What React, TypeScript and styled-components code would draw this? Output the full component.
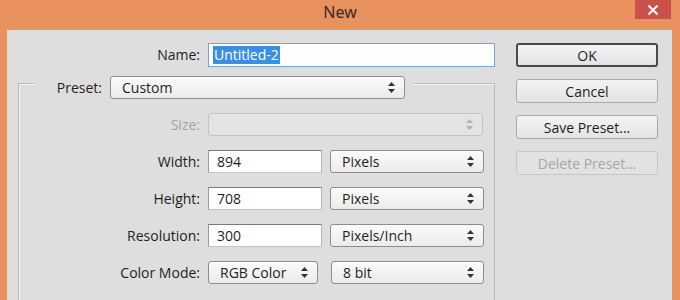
import React from "react";
import styled, { createGlobalStyle, css } from "styled-components";

const Global = createGlobalStyle`
  html, body { margin: 0; padding: 0; background: #e9915f; }
  body { font-family: "Open Sans", "Noto Sans", Arial, sans-serif; }
`;

const Window = styled.div`
  width: 680px;
  height: 300px;
  background: #e9915f;
  padding: 0 8px 0 7px;
  box-sizing: border-box;
  display: flex;
  flex-direction: column;
  overflow: hidden;
`;

const TitleBar = styled.div`
  height: 30px;
  flex: none;
  display: grid;
  grid-template-columns: 1fr auto 1fr;
  align-items: start;
  margin: 0 1px 0 2px;
`;

const Title = styled.div`
  grid-column: 2;
  font-family: "Noto Sans", "Open Sans", sans-serif;
  font-size: 16px;
  color: #3a2a22;
  line-height: 24px;
`;

const CloseButton = styled.button`
  grid-column: 3;
  justify-self: end;
  width: 36px;
  height: 19px;
  border: none;
  padding: 0;
  background: #c9504b;
  display: flex;
  align-items: center;
  justify-content: center;
`;

const Body = styled.div`
  flex: 1;
  background: #dedede;
  display: flex;
  gap: 21px;
  padding-top: 13px;
  font-size: 14px;
  color: #1e1e1e;
`;

const FormColumn = styled.div`
  width: 488px;
  display: flex;
  flex-direction: column;
  gap: 16px;
`;

const NameRow = styled.div`
  display: grid;
  grid-template-columns: 193px 287px;
  gap: 8px;
  align-items: center;
`;

const Label = styled.span<{ $disabled?: boolean }>`
  text-align: right;
  white-space: nowrap;
  color: ${p => (p.$disabled ? "#a3a3a3" : "#1e1e1e")};
  line-height: 20px;
`;

const NameInput = styled.div`
  height: 24px;
  box-sizing: border-box;
  border: 1px solid #7da2ce;
  background: #fff;
  padding: 1px 4px;
  display: flex;
  align-items: center;
`;

const Selected = styled.span`
  background: #3b8fe3;
  color: #fff;
  padding: 0 1px;
  line-height: 18px;
`;

const GroupBox = styled.div`
  margin-left: 11px;
  flex: 1;
  border: 1px solid #b9b9b9;
  border-bottom: none;
  box-shadow: inset 1px 1px 0 #f4f4f4;
  display: flex;
  flex-direction: column;
  gap: 14px;
`;

const GroupHeader = styled.div`
  margin: -8px 0 0 16px;
  padding-right: 8px;
  width: fit-content;
  background: #dedede;
  display: grid;
  grid-template-columns: 67px 295px;
  gap: 8px;
  align-items: center;
`;

const FieldRow = styled.div<{ $cols: string }>`
  display: grid;
  grid-template-columns: ${p => p.$cols};
  gap: 8px;
  align-items: center;
`;

const Controls = styled.div<{ $gap: number }>`
  display: flex;
  gap: ${p => p.$gap}px;
`;

const TextField = styled.div<{ $w: number }>`
  width: ${p => p.$w}px;
  height: 23px;
  box-sizing: border-box;
  border: 1px solid #8a8a8a;
  border-color: #7a7a7a #b4b4b4 #c4c4c4 #9a9a9a;
  background: #fff;
  padding: 0 8px;
  display: flex;
  align-items: center;
`;

const SelectBox = styled.div<{ $w: number; $disabled?: boolean }>`
  width: ${p => p.$w}px;
  height: 23px;
  box-sizing: border-box;
  border-radius: 3px;
  padding: 0 9px 0 11px;
  display: flex;
  align-items: center;
  justify-content: space-between;
  ${p =>
    p.$disabled
      ? css`
          border: 1px solid #c3c3c3;
          background: #e4e4e4;
          color: #b0b0b0;
        `
      : css`
          border: 1px solid #8d8d8d;
          background: linear-gradient(#fbfbfb, #ebebeb);
          color: #1e1e1e;
        `}
`;

const ButtonColumn = styled.div`
  width: 142px;
  display: flex;
  flex-direction: column;
  gap: 12px;
`;

const Button = styled.button<{ $default?: boolean }>`
  height: 24px;
  border-radius: 3px;
  font-family: inherit;
  font-size: 14px;
  padding: 0;
  background: linear-gradient(#f4f4f4, #e3e3e3);
  color: ${p => (p.disabled ? "#a6a6a6" : "#1e1e1e")};
  border: ${p => (p.$default ? "2px solid #4a4a4a" : "1px solid #a9a9a9")};
  ${p =>
    p.disabled &&
    css`
      border-color: #c6c6c6;
      background: #e2e2e2;
    `}
`;

const Arrows = ({ disabled }: { disabled?: boolean }) => (
  <svg width="7" height="11" viewBox="0 0 7 11">
    <path d="M3.5 0 L7 4 L0 4 Z M0 7 L7 7 L3.5 11 Z" fill={disabled ? "#b2b2b2" : "#333"} />
  </svg>
);

const Select = ({ w, value, disabled }: { w: number; value: string; disabled?: boolean }) => (
  <SelectBox $w={w} $disabled={disabled}>
    <span>{value}</span>
    <Arrows disabled={disabled} />
  </SelectBox>
);

const rows = [
  { label: "Width:", value: "894", unit: "Pixels" },
  { label: "Height:", value: "708", unit: "Pixels" },
  { label: "Resolution:", value: "300", unit: "Pixels/Inch" },
];

export default function App() {
  return (
    <Window>
      <Global />
      <TitleBar>
        <Title>New</Title>
        <CloseButton>
          <svg width="12" height="12" viewBox="0 0 12 12">
            <path d="M1.5 1.5 L10.5 10.5 M10.5 1.5 L1.5 10.5" stroke="#fff" strokeWidth="2" />
          </svg>
        </CloseButton>
      </TitleBar>
      <Body>
        <FormColumn>
          <NameRow>
            <Label>Name:</Label>
            <NameInput>
              <Selected>Untitled-2</Selected>
            </NameInput>
          </NameRow>
          <GroupBox>
            <GroupHeader>
              <Label>Preset:</Label>
              <Select w={295} value="Custom" />
            </GroupHeader>
            <FieldRow $cols="181px 275px">
              <Label $disabled>Size:</Label>
              <Select w={275} value="" disabled />
            </FieldRow>
            {rows.map(r => (
              <FieldRow key={r.label} $cols="181px auto">
                <Label>{r.label}</Label>
                <Controls $gap={8}>
                  <TextField $w={114}>{r.value}</TextField>
                  <Select w={154} value={r.unit} />
                </Controls>
              </FieldRow>
            ))}
            <FieldRow $cols="181px auto">
              <Label>Color Mode:</Label>
              <Controls $gap={13}>
                <Select w={110} value="RGB Color" />
                <Select w={153} value="8 bit" />
              </Controls>
            </FieldRow>
          </GroupBox>
        </FormColumn>
        <ButtonColumn>
          <Button $default>OK</Button>
          <Button>Cancel</Button>
          <Button>Save Preset...</Button>
          <Button disabled>Delete Preset...</Button>
        </ButtonColumn>
      </Body>
    </Window>
  );
}
